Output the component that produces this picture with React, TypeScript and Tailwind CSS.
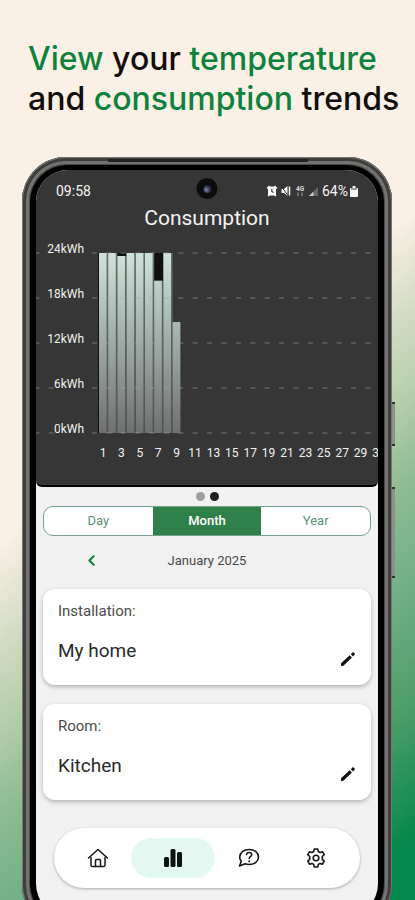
import { useState } from "react";
import { ChevronLeft } from "lucide-react";

const TICKS = [24, 18, 12, 6, 0];
const USAGE = [24, 24, 23.6, 24, 24, 24, 20.3, 24, 14.8];
const DAYS = Array.from({ length: 16 }, (_, i) => i * 2 + 1);
const PERIODS = ["Day", "Month", "Year"];

const BASE = 191;
const SCALE = 7.5;
const PITCH = 9.2;

function ConsumptionChart() {
  return (
    <svg viewBox="0 0 342 243" className="block w-full" role="img" aria-label="Consumption">
      <defs>
        <linearGradient id="bar" gradientUnits="userSpaceOnUse" x1="0" y1="11" x2="0" y2="191">
          <stop offset="0" stopColor="#d0e2da" />
          <stop offset="0.45" stopColor="#a3b0ab" />
          <stop offset="1" stopColor="#6f7170" />
        </linearGradient>
        <linearGradient id="gap" gradientUnits="userSpaceOnUse" x1="0" y1="11" x2="0" y2="191">
          <stop offset="0" stopColor="#5f7069" />
          <stop offset="1" stopColor="#525453" />
        </linearGradient>
      </defs>

      <rect x="62" y="11" width="74" height="180" fill="#101010" />
      {USAGE.map((value, i) => (
        <g key={i}>
          <rect
            x={63 + i * PITCH}
            y={BASE - value * SCALE}
            width={i === 8 ? 8 : PITCH}
            height={value * SCALE}
            fill="url(#gap)"
          />
          <rect
            x={63 + i * PITCH}
            y={BASE - value * SCALE}
            width="7.6"
            height={value * SCALE}
            fill="url(#bar)"
          />
        </g>
      ))}

      {TICKS.map((tick) => (
        <g key={tick}>
          <line
            x1="-1.7"
            x2="342"
            y1={BASE - tick * SCALE}
            y2={BASE - tick * SCALE}
            stroke="#a5a5a5"
            strokeOpacity="0.6"
            strokeDasharray="5 9.4"
          />
          <text
            x="48"
            y={BASE - tick * SCALE}
            textAnchor="end"
            fontSize="12"
            fill="#f2f2f2"
            stroke="#363636"
            strokeWidth="3"
            paintOrder="stroke"
          >
            {tick}kWh
          </text>
        </g>
      ))}

      {DAYS.map((day) => (
        <text
          key={day}
          x={67 + (day - 1) * PITCH}
          y="215"
          textAnchor="middle"
          fontSize="12"
          fill="#f2f2f2"
        >
          {day}
        </text>
      ))}
    </svg>
  );
}

function StatusIcons() {
  return (
    <svg width="54" height="14" viewBox="0 0 54 14" aria-hidden="true">
      {/* alarm */}
      <path d="M2 2.500h8v9H2z" fill="#f5f5f5" />
      <path d="M1 4.500 3.500 2M11 4.500 8.500 2M2 12l1.500-1.500M10 12l-1.500-1.500" stroke="#f5f5f5" strokeWidth="1.400" />
      <path d="M5.800 4.800v2.600l1.800 1" stroke="#363636" strokeWidth="1.100" fill="none" />
      {/* muted speaker */}
      <path d="M15.500 5h2.500l3.500-3v10L18 9h-2.500z" fill="#f5f5f5" />
      <path d="M15 2l7 9.500" stroke="#363636" strokeWidth="1" />
      <path d="M23.500 2.500v9" stroke="#f5f5f5" strokeWidth="1.500" />
      {/* network and signal */}
      <text x="30" y="6.500" fontSize="6.500" fontWeight="700" fill="#dcdcdc">4G</text>
      <path d="M32 8.500v3.500M36 8.500v3.500" stroke="#8d8d8d" strokeWidth="1.300" />
      <path d="M43 12l9-9v9z" fill="#686868" />
      <path d="M43 12l4.500-4.500V12z" fill="#c9c9c9" />
    </svg>
  );
}

function PencilIcon() {
  return (
    <svg width="16" height="16" viewBox="0 0 16 16" fill="#111" aria-hidden="true">
      <path d="M1 12.600c0-.3.100-.5.300-.7L9.700 4.200l2.200 2.200-8.200 8.200c-.2.200-.4.300-.7.300H1.700c-.4 0-.7-.3-.7-.7z" />
      <path d="M10.800 3.200l1.700-1.600c.4-.4.900-.4 1.300 0l.8.800c.4.400.4.900 0 1.300L13 5.400z" />
    </svg>
  );
}

function HomeIcon() {
  return (
    <svg width="22" height="20" viewBox="0 0 22 20" fill="none" stroke="#161616" strokeWidth="1.500" strokeLinecap="round" strokeLinejoin="round" aria-hidden="true">
      <path d="M1.500 10 11 1.500 20.500 10" />
      <path d="M4 9.500V17c0 1 .6 1.600 1.600 1.600h10.800c1 0 1.600-.6 1.600-1.600V9.500" />
      <path d="M8.500 18.500v-6c0-.6.400-1 1-1h3c.6 0 1 .4 1 1v6" />
    </svg>
  );
}

function ChartIcon() {
  return (
    <svg width="20" height="20" viewBox="0 0 20 20" fill="#0d1512" aria-hidden="true">
      <rect x="1" y="9" width="5" height="10" rx="1.500" />
      <rect x="7.500" y="1" width="5" height="18" rx="1.500" />
      <rect x="14" y="4" width="5" height="15" rx="1.500" />
    </svg>
  );
}

function HelpIcon() {
  return (
    <svg width="22" height="20" viewBox="0 0 22 20" fill="none" stroke="#161616" strokeWidth="1.600" strokeLinecap="round" strokeLinejoin="round" aria-hidden="true">
      <path d="M3.300 13.200C2.200 12 1.700 10.700 1.700 9.200c0-4.500 4-7.700 9.500-7.700s9.300 3.200 9.300 7.600-3.900 7.400-9.300 7.400c-1.500 0-2.900-.2-4.200-.7L1.500 18z" />
      <path d="M8.500 6.400c.4-1.300 1.300-1.900 2.600-1.900 1.500 0 2.600.8 2.600 2.200 0 1.900-2.500 2-2.500 3.800" />
      <path d="M11.200 13.200v.2" strokeWidth="1.800" />
    </svg>
  );
}

function GearIcon() {
  return (
    <svg width="20" height="20" viewBox="0 0 20 20" fill="none" stroke="#161616" strokeWidth="1.600" strokeLinejoin="round" aria-hidden="true">
      <path d="M8.300 1h3.400l.6 2.500 1.700 1 2.500-.8 1.700 3-1.900 1.800v2.900l1.900 1.800-1.700 3-2.500-.8-1.700 1-.6 2.600H8.300l-.6-2.600-1.700-1-2.500.8-1.700-3 1.900-1.800V8.500L1.800 6.700l1.700-3 2.500.8 1.700-1z" />
      <circle cx="10" cy="10" r="2.800" />
    </svg>
  );
}

function InfoCard({ label, value }: { label: string; value: string }) {
  return (
    <section className="flex items-end justify-between rounded-xl bg-white px-[15px] pt-3 pb-[18px] shadow-[0_2px_4px_rgba(0,0,0,0.25)]">
      <div>
        <h2 className="text-[15px] leading-5 text-[#4c4c4c]">{label}</h2>
        <p className="mt-[18px] pb-1 text-[19px] leading-6 text-[#2a2a2a]">{value}</p>
      </div>
      <button type="button" aria-label={"Edit " + value}>
        <PencilIcon />
      </button>
    </section>
  );
}

export default function App() {
  const [period, setPeriod] = useState("Month");

  return (
    <div className="h-screen overflow-hidden bg-[linear-gradient(141deg,#fbf0e5_44%,#d3dcc3_52%,#b8d0ad_58%,#8ebb92_66%,#72b085_74%,#4d9d68_84%,#04884b_95%)] font-[Roboto,sans-serif]">
      <h1 className="pt-[39px] pl-7 font-[Inter,sans-serif] text-[32px] leading-10 font-medium whitespace-nowrap text-[#120d0b]">
        <span className="text-[#0d823c]">View</span> your <span className="text-[#0d823c]">temperature</span>
        <br />
        and <span className="text-[#0d823c]">consumption</span> trends
      </h1>

      <div className="relative mt-[38px] mr-[23px] ml-[22px] rounded-[44px] bg-[#4b4a48] p-2 shadow-[inset_0_0_0_1px_#777775,inset_0_0_0_4px_#3e3e3d,inset_0_0_0_7px_#757371]">
        <div className="absolute top-0.5 right-[84px] left-[86px] h-[3px] bg-[#222]" />
        <div className="absolute top-[245px] -right-[3px] h-11 w-[3px] border-y-2 border-[#333] bg-[#8f8f8b]" />
        <div className="absolute top-[330px] -right-[3px] h-[91px] w-[3px] border-y-2 border-[#333] bg-[#8f8f8b]" />

        <div className="rounded-[37px] bg-black px-[6px] py-[5px]">
          <div className="overflow-hidden rounded-[32px] bg-[#f1f1f1]">
            <div className="rounded-b-md border-b-2 border-black bg-[#363636] text-[#f4f4f4]">
              <div className="relative flex h-9 items-end justify-between px-5 text-sm leading-[30px]">
                <span>09:58</span>
                <div className="absolute top-2 left-1/2 flex size-[21px] -translate-x-1/2 items-center justify-center rounded-full bg-[#0c0c0e]">
                  <span className="size-2 rounded-full bg-[radial-gradient(circle_at_35%_60%,#8088a8,#22243a_60%)]" />
                </div>
                <div className="flex items-center gap-0.5">
                  <StatusIcons />
                  <span>64%</span>
                  <svg width="8" height="12" viewBox="0 0 8 12" fill="#f5f5f5" aria-hidden="true">
                    <path d="M2.500 1h3v2H8v8c0 .6-.4 1-1 1H1c-.6 0-1-.4-1-1V3h2.500z" />
                    <path d="M1 3h6v2H1z" fill="#999" />
                  </svg>
                </div>
              </div>
              <h2 className="text-center text-[21px] leading-6">Consumption</h2>
              <div className="mt-3">
                <ConsumptionChart />
              </div>
            </div>

            <div className="px-[7px]">
              <div className="flex justify-center gap-[5px] pt-[5px] pb-[5px]">
                <span className="size-[9px] rounded-full bg-[#9f9f9f]" />
                <span className="size-[9px] rounded-full bg-[#202020]" />
              </div>
              <div className="flex h-[30px] overflow-hidden rounded-[10px] border border-[#73a289] bg-white text-[13px]">
                {PERIODS.map((name) => (
                  <button
                    key={name}
                    type="button"
                    onClick={() => setPeriod(name)}
                    aria-pressed={period === name}
                    className={
                      period === name
                        ? "flex-1 bg-[#2f804b] font-medium text-white"
                        : "flex-1 text-[#5b9273]"
                    }
                  >
                    {name}
                  </button>
                ))}
              </div>
              <div className="relative flex h-[53px] items-center justify-center pb-1 text-[13px] text-[#484848]">
                <button type="button" aria-label="Previous month" className="absolute left-10 text-[#14803f]">
                  <ChevronLeft size={17} strokeWidth={3} />
                </button>
                January 2025
              </div>
              <div className="flex flex-col gap-[19px]">
                <InfoCard label="Installation:" value="My home" />
                <InfoCard label="Room:" value="Kitchen" />
              </div>
            </div>

            <nav className="mx-[18px] mt-7 mb-7 flex h-[60px] items-center rounded-full bg-white px-[10px] shadow-[0_1px_3px_rgba(0,0,0,0.3)]">
              <a href="#home" aria-label="Home" className="flex flex-1 justify-center">
                <HomeIcon />
              </a>
              <a href="#trends" aria-label="Trends" className="flex h-10 w-[84px] items-center justify-center rounded-full bg-[#e4f8f1]">
                <ChartIcon />
              </a>
              <a href="#help" aria-label="Help" className="flex flex-1 justify-center">
                <HelpIcon />
              </a>
              <a href="#settings" aria-label="Settings" className="flex flex-1 justify-center">
                <GearIcon />
              </a>
            </nav>
          </div>
        </div>
      </div>
    </div>
  );
}
